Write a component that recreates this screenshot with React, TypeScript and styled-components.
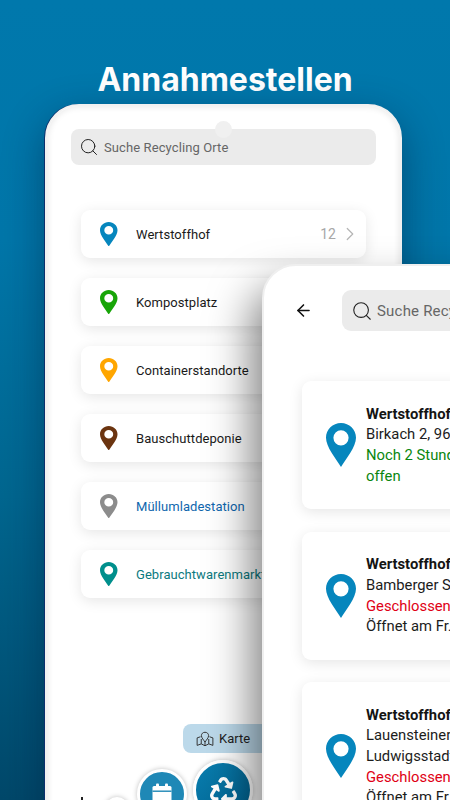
import { createGlobalStyle, styled } from "styled-components";
import { ArrowLeft, ChevronRight, Search } from "lucide-react";
import { FaRecycle } from "react-icons/fa";

const GlobalStyle = createGlobalStyle`
  html, body {
    margin: 0;
    padding: 0;
    width: 450px;
    height: 800px;
    overflow: hidden;
    font-family: Roboto, "Liberation Sans", sans-serif;
  }
`;

const PIN_BLUE = "#0686bd";

const places = [
  { name: "Wertstoffhof", pin: PIN_BLUE, color: "#1a1a1a", count: "12" },
  { name: "Kompostplatz", pin: "#18a508", color: "#1a1a1a" },
  { name: "Containerstandorte", pin: "#ffa600", color: "#1a1a1a" },
  { name: "Bauschuttdeponie", pin: "#6b3410", color: "#1a1a1a" },
  { name: "Müllumladestation", pin: "#8c8c8c", color: "#0f66ad" },
  { name: "Gebrauchtwarenmarkt", pin: "#008f8c", color: "#0c7a80" },
];

const results = [
  {
    title: "Wertstoffhof Birkach",
    lines: [
      { text: "Birkach 2, 96317 Kronach", tone: "plain" },
      { text: "Noch 2 Stunden und 30 Minuten", tone: "open" },
      { text: "offen", tone: "open" },
    ],
  },
  {
    title: "Wertstoffhof Kronach",
    lines: [
      { text: "Bamberger Straße 51", tone: "plain" },
      { text: "Geschlossen", tone: "closed" },
      { text: "Öffnet am Fr. um 08:00", tone: "plain" },
    ],
  },
  {
    title: "Wertstoffhof Ludwigsstadt",
    lines: [
      { text: "Lauensteiner Straße 44", tone: "plain" },
      { text: "Ludwigsstadt", tone: "plain" },
      { text: "Geschlossen", tone: "closed" },
      { text: "Öffnet am Fr. um 08:00", tone: "plain" },
    ],
  },
];

const toneColors: Record<string, string> = {
  plain: "#1c1c1c",
  open: "#0a860f",
  closed: "#e00016",
};

function Pin({ color, width, height }: { color: string; width: number; height: number }) {
  return (
    <svg width={width} height={height} viewBox="0 0 30 44" preserveAspectRatio="none">
      <path
        fill={color}
        fillRule="evenodd"
        d="M15 0C6.7 0 0 6.6 0 14.8 0 24 10 36 15 44c5-8 15-20 15-29.2C30 6.6 23.3 0 15 0Zm0 7.2a7.6 7.6 0 1 1 0 15.2 7.6 7.6 0 0 1 0-15.2Z"
      />
    </svg>
  );
}

function CalendarIcon() {
  return (
    <svg width="24" height="24" viewBox="0 0 24 24">
      <rect x="2.5" y="4" width="19" height="18" rx="1.5" fill="#fff" />
      <rect x="6" y="1.5" width="3" height="5" rx="1" fill="#fff" />
      <rect x="15" y="1.5" width="3" height="5" rx="1" fill="#fff" />
      <rect x="2.5" y="8.5" width="19" height="1.4" fill="#1f88b6" />
    </svg>
  );
}

function MapIcon() {
  return (
    <svg width="18" height="18" viewBox="0 0 24 22" fill="none" stroke="#333" strokeWidth="1.3" strokeLinejoin="round">
      <path d="M6 8 1.5 9.5v10L7 17.5l5 2.5 5-2.5 5.5 2v-10L18 8" />
      <path d="M12 2C9.2 2 7.2 4 7.2 6.5c0 3 3.2 6 4.8 8.7 1.6-2.7 4.8-5.7 4.8-8.7C16.8 4 14.8 2 12 2Z" />
      <path d="M7 17.5V11M17 17.5V11M12 20v-4.8" />
    </svg>
  );
}

export default function App() {
  return (
    <>
      <GlobalStyle />
      <Page>
        <Heading>Annahmestellen</Heading>
        <BackPhone>
          <SearchBar>
            <Search size={20} strokeWidth={1.2} color="#222" />
            <SearchText>Suche Recycling Orte</SearchText>
          </SearchBar>
          <Camera />
          <PlaceList>
            {places.map((place) => (
              <PlaceRow key={place.name}>
                <PinSlot>
                  <Pin color={place.pin} width={17.5} height={24.5} />
                </PinSlot>
                <PlaceName $color={place.color}>{place.name}</PlaceName>
                {place.count && <PlaceCount>{place.count}</PlaceCount>}
                {place.count && <ChevronRight size={22} strokeWidth={1.3} color="#b5b5b5" />}
              </PlaceRow>
            ))}
          </PlaceList>
          <MapButton>
            <MapIcon />
            Karte
          </MapButton>
          <NavMark />
          <TinyFab />
          <SmallFab>
            <CalendarIcon />
          </SmallFab>
          <BigFab>
            <FaRecycle size={27} color="#fff" />
          </BigFab>
        </BackPhone>
        <FrontPhone>
          <FrontTop>
            <ArrowLeft size={19} strokeWidth={2} color="#111" />
            <FrontSearch>
              <Search size={22} strokeWidth={1.2} color="#222" />
              <FrontSearchText>Suche Recycling Orte</FrontSearchText>
            </FrontSearch>
          </FrontTop>
          <ResultList>
            {results.map((result) => (
              <ResultCard key={result.title}>
                <Pin color={PIN_BLUE} width={30} height={44} />
                <ResultBody>
                  <ResultTitle>{result.title}</ResultTitle>
                  {result.lines.map((line) => (
                    <ResultLine key={line.text} $color={toneColors[line.tone]}>
                      {line.text}
                    </ResultLine>
                  ))}
                </ResultBody>
              </ResultCard>
            ))}
          </ResultList>
        </FrontPhone>
      </Page>
    </>
  );
}

const Page = styled.div`
  position: relative;
  width: 450px;
  height: 800px;
  overflow: hidden;
  background: linear-gradient(180deg, #0078ac 0%, #0076a9 30%, #00668f 62%, #00486a 100%);
`;

const Heading = styled.h1`
  margin: 0;
  padding-top: 60px;
  text-align: center;
  color: #fff;
  font-family: Inter, "Open Sans", sans-serif;
  font-size: 32px;
  font-weight: 700;
  line-height: 40px;
`;

const BackPhone = styled.div`
  position: absolute;
  left: 45px;
  top: 104px;
  width: 357px;
  height: 760px;
  box-sizing: border-box;
  padding: 23px 0 0 24px;
  background: #fff;
  border-radius: 34px;
  border: 2px solid #f1f1f1;
  box-shadow:
    -1px 0 0 #0b2f6b,
    0 14px 40px rgba(0, 25, 55, 0.45),
    inset 0 0 6px 1px rgba(0, 0, 0, 0.09);
`;

const Camera = styled.div`
  position: absolute;
  left: 168px;
  top: 15px;
  width: 17px;
  height: 17px;
  border-radius: 50%;
  background: #f0f0f0;
`;

const SearchBar = styled.div`
  display: flex;
  align-items: center;
  gap: 5px;
  width: 305px;
  height: 36px;
  box-sizing: border-box;
  padding-left: 8px;
  background: #ebebeb;
  border-radius: 8px;
`;

const SearchText = styled.span`
  color: #666;
  font-size: 13px;
  letter-spacing: 0.1px;
`;

const PlaceList = styled.div`
  display: flex;
  flex-direction: column;
  gap: 20px;
  margin: 45px 0 0 10px;
  width: 285px;
`;

const PlaceRow = styled.div`
  display: flex;
  align-items: center;
  height: 48px;
  box-sizing: border-box;
  padding: 0 5px 0 19px;
  background: #fff;
  border-radius: 9px;
  box-shadow: 0 3px 14px rgba(0, 0, 0, 0.1);
`;

const PinSlot = styled.div`
  display: flex;
  width: 36px;
  flex-shrink: 0;
`;

const PlaceName = styled.span<{ $color: string }>`
  flex: 1;
  color: ${(p) => p.$color};
  font-size: 13px;
  letter-spacing: 0.05px;
  white-space: nowrap;
`;

const PlaceCount = styled.span`
  margin-right: 3px;
  color: #a8a8a8;
  font-size: 14px;
`;

const MapButton = styled.div`
  position: absolute;
  left: 136px;
  top: 618px;
  display: flex;
  align-items: center;
  gap: 5px;
  width: 120px;
  height: 29px;
  box-sizing: border-box;
  padding-left: 13px;
  background: #bcd9ea;
  border-radius: 8px;
  color: #222;
  font-size: 13px;
`;

const NavMark = styled.div`
  position: absolute;
  left: 34px;
  top: 691px;
  width: 2px;
  height: 3px;
  background: #222;
`;

const Fab = styled.div`
  position: absolute;
  display: flex;
  align-items: center;
  justify-content: center;
  box-sizing: border-box;
  border-radius: 50%;
  border: 3px solid #fff;
  box-shadow: 0 0 5px rgba(0, 0, 0, 0.25);
`;

const SmallFab = styled(Fab)`
  left: 90px;
  top: 663px;
  width: 50px;
  height: 50px;
  background: #1f88b6;
`;

const BigFab = styled(Fab)`
  left: 146px;
  top: 654px;
  width: 60px;
  height: 60px;
  background: linear-gradient(135deg, #0a7fb0, #005f8c);
`;

const TinyFab = styled(Fab)`
  left: 58px;
  top: 691px;
  width: 24px;
  height: 24px;
  background: #8cbdd6;
`;

const FrontPhone = styled.div`
  position: absolute;
  left: 262px;
  top: 264px;
  width: 360px;
  height: 700px;
  box-sizing: border-box;
  padding: 24px 0 0 30px;
  background: #fff;
  border-radius: 34px;
  border: 2px solid #efefef;
  box-shadow: -10px 24px 44px rgba(0, 0, 0, 0.5);
`;

const FrontTop = styled.div`
  display: flex;
  align-items: center;
  gap: 29px;
`;

const FrontSearch = styled.div`
  display: flex;
  align-items: center;
  gap: 4px;
  width: 260px;
  height: 41px;
  box-sizing: border-box;
  padding-left: 9px;
  background: #ebebeb;
  border-radius: 9px;
`;

const FrontSearchText = styled.span`
  color: #666;
  font-size: 15px;
  letter-spacing: 0.2px;
  white-space: nowrap;
`;

const ResultList = styled.div`
  display: flex;
  flex-direction: column;
  gap: 22.5px;
  margin: 50px 0 0 8px;
`;

const ResultCard = styled.div`
  display: flex;
  align-items: center;
  gap: 10px;
  width: 300px;
  box-sizing: border-box;
  padding: 22.6px 0 22.6px 24px;
  background: #fff;
  border-radius: 9px;
  box-shadow: 0 3px 14px rgba(0, 0, 0, 0.1);
`;

const ResultBody = styled.div`
  display: flex;
  flex-direction: column;
  min-width: 0;
`;

const ResultTitle = styled.div`
  color: #141414;
  font-size: 14.8px;
  font-weight: 700;
  line-height: 20.7px;
  white-space: nowrap;
`;

const ResultLine = styled.div<{ $color: string }>`
  color: ${(p) => p.$color};
  font-size: 14.8px;
  line-height: 20.7px;
  white-space: nowrap;
`;
